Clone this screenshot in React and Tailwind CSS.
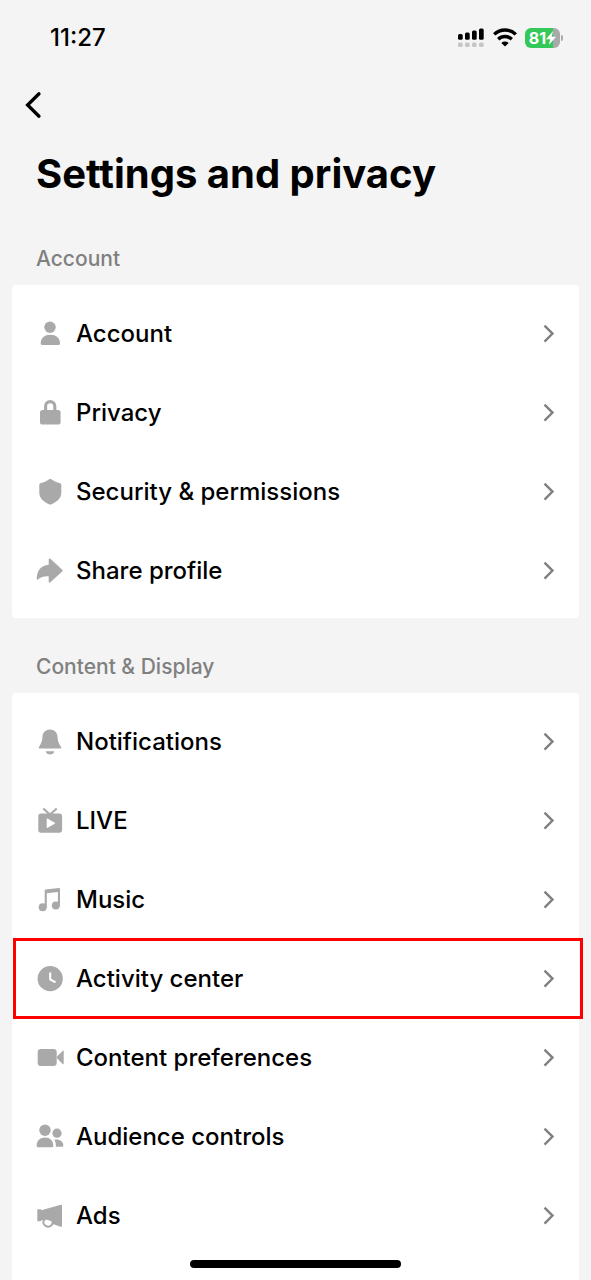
import React from 'react';

const AccountIcon = () => (
  <>
    <circle cx="14" cy="7.3" r="5.7" />
    <path d="M4.7 23.2C4.7 18 8.6 14.7 14.3 14.7S24 18 24 23.2c0 1.2-.6 1.800-1.800 1.800H6.500c-1.200 0-1.800-.6-1.800-1.800Z" />
  </>
);

const LockIcon = () => (
  <>
    <rect x="4" y="11" width="20.600" height="14.600" rx="2.600" />
    <path d="M9.600 13V7.200a4.600 4.600 0 0 1 9.200 0V13" fill="none" stroke="currentColor" strokeWidth="3.100" />
  </>
);

const ShieldIcon = () => (
  <path d="M13.600 1.100a1.800 1.800 0 0 1 1.400 0c3.200 2.200 6 3.400 9.200 4.200.7.2 1.100.6 1.100 1.300v8.200c0 5.200-4.200 9.300-10.300 11.600a1.900 1.900 0 0 1-1.400 0C7.500 24.100 3.300 20 3.300 14.800V6.600c0-.7.4-1.100 1.100-1.300 3.200-.8 6-2 9.200-4.200Z" />
);

const ShareIcon = () => (
  <path d="M12.700 2.500c0-1.100.9-1.400 1.700-.7l11.800 10.900c.6.5.6 1.200 0 1.700L14.400 25.300c-.8.7-1.700.3-1.700-.7v-5.300c-4.700-.2-7.900.7-10.500 3-.8.7-1.500.4-1.500-.6C.9 13.500 5.100 8.200 12.700 7.700V2.500Z" />
);

const BellIcon = () => (
  <>
    <path d="M14 1.500c4.300 0 7.300 3 7.500 7.100.2 4.300.9 6.400 3.500 10.400.6.9.3 1.500-.7 1.500H3.700c-1 0-1.300-.6-.7-1.500 2.600-4 3.300-6.100 3.500-10.400.2-4.100 3.200-7.100 7.500-7.100Z" />
    <path d="M10.400 23.200h7.200c.6 0 .8.500.4 1-1 1.500-2.300 2.200-4 2.200s-3-.7-4-2.200c-.4-.5-.2-1 .4-1Z" />
  </>
);

const LiveIcon = () => (
  <>
    <path fillRule="evenodd" d="M5.100 6.500h18.200c1.800 0 2.800 1 2.800 2.800v13.700c0 1.800-1 2.800-2.800 2.800H5.100c-1.800 0-2.800-1-2.800-2.800V9.300c0-1.800 1-2.800 2.800-2.800Zm5.600 5.600v8.200c0 .5.400.7.900.5l7.200-4.100c.5-.3.5-.7 0-1l-7.200-4.100c-.5-.2-.9 0-.9.500Z" />
    <path d="m7.300 1.400 6.700 6.200 6.700-6.200" fill="none" stroke="currentColor" strokeWidth="2" />
  </>
);

const MusicIcon = () => (
  <>
    <circle cx="6.700" cy="21.300" r="4" />
    <circle cx="19.800" cy="19.600" r="4" />
    <path d="M8.700 21.300V4.500c0-.7.300-1 1-1.100l13.200-1.500c.7-.1 1.100.2 1.100.9v16.800h-2.100V5.900L10.800 7.200v14.100Z" />
  </>
);

const ClockIcon = () => (
  <>
    <circle cx="14.200" cy="13.700" r="12.600" />
    <path d="M14.200 7.500v6.900l5.300 3" fill="none" stroke="#fff" strokeWidth="2.100" />
  </>
);

const VideoIcon = () => (
  <>
    <rect x="1.700" y="4.900" width="19" height="17" rx="3.200" />
    <path d="m21.300 12.200 5.300-5.300c.6-.6 1.100-.4 1.100.3v12.400c0 .7-.5.900-1.100.3l-5.300-5.300a1.700 1.700 0 0 1 0-2.400Z" />
  </>
);

const AudienceIcon = () => (
  <>
    <circle cx="9" cy="7.200" r="5.700" />
    <circle cx="21" cy="10.200" r="4.600" />
    <path d="M.7 22.400c0-4.700 3.300-7.900 8.300-7.900s8.300 3.200 8.300 7.900c0 1.200-.5 1.800-1.600 1.800H2.300c-1.100 0-1.600-.6-1.600-1.800Z" />
    <path d="M18.300 16.800c4.900-1.100 9 1.500 9 5.600 0 .8-.4 1.300-1.200 1.300h-6.200c.1-2.900-.3-4.900-1.600-6.900Z" />
  </>
);

const AdsIcon = () => (
  <>
    <path d="M1.900 7.200h2.300c.8 0 1.100.3 1.300 1L24.700 2.700c.8-.2 1.300.1 1.300.9v20.200c0 .8-.5 1.100-1.300.9L5.500 18.100c-.1.800-.5 1.200-1.300 1.200H1.900c-.4 0-.6-.2-.6-.6V7.800c0-.4.200-.6.600-.6Z" />
    <circle cx="12.300" cy="20" r="3.300" fill="#fff" />
    <path d="M6.900 16.500 17.900 20v-6h-11Z" />
    <path d="M7.500 18.600a4.700 4.700 0 1 0 9.400 2.400" fill="none" stroke="currentColor" strokeWidth="2" />
  </>
);

const sections = [
  {
    title: 'Account',
    items: [
      { label: 'Account', icon: AccountIcon },
      { label: 'Privacy', icon: LockIcon },
      { label: 'Security & permissions', icon: ShieldIcon },
      { label: 'Share profile', icon: ShareIcon },
    ],
  },
  {
    title: 'Content & Display',
    grow: true,
    items: [
      { label: 'Notifications', icon: BellIcon },
      { label: 'LIVE', icon: LiveIcon },
      { label: 'Music', icon: MusicIcon },
      { label: 'Activity center', icon: ClockIcon, highlighted: true },
      { label: 'Content preferences', icon: VideoIcon },
      { label: 'Audience controls', icon: AudienceIcon },
      { label: 'Ads', icon: AdsIcon },
    ],
  },
];

function StatusBar() {
  return (
    <div className="flex h-19 items-center justify-between pr-7 pl-[50px]">
      <span className="text-2xl leading-7 font-medium">11:27</span>
      <div className="flex items-center gap-2">
        <svg className="h-5 w-[27px]" viewBox="0 0 27 20" aria-hidden="true">
          <rect x="0" y="6" width="4.700" height="5.700" rx="1.500" />
          <rect x="7" y="4.600" width="4.700" height="7.100" rx="1.500" />
          <rect x="14" y="2.600" width="4.700" height="9.100" rx="1.500" />
          <rect x="21" y="0.400" width="4.700" height="11.300" rx="1.500" />
          <g fill="#c6c6c6">
            <rect x="0" y="14.600" width="4.700" height="4.500" rx="1.500" />
            <rect x="7" y="14.600" width="4.700" height="4.500" rx="1.500" />
            <rect x="14" y="14.600" width="4.700" height="4.500" rx="1.500" />
            <rect x="21" y="14.600" width="4.700" height="4.500" rx="1.500" />
          </g>
        </svg>
        <svg className="h-5 w-6" viewBox="0 0 24 20" fill="none" stroke="#000" strokeWidth="3.400" aria-hidden="true">
          <path d="M1.200 6.400a15.400 15.400 0 0 1 21.600 0" />
          <path d="M5.200 11.200a9.800 9.800 0 0 1 13.600 0" />
          <path d="M12 18.400 8.300 14.900a5.400 5.400 0 0 1 7.400 0Z" fill="#000" stroke="none" />
        </svg>
        <div className="flex items-center gap-px">
          <div className="flex h-5 w-[35px] items-center justify-center rounded-md bg-linear-to-r from-[#34c759] from-81% to-[#a9a9a9] to-81% text-white">
            <span className="text-base leading-5 font-bold">81</span>
            <svg className="h-4 w-2.5" viewBox="0 0 10 16" fill="#fff" aria-hidden="true">
              <path d="M7 1 0 9.200h4.200L2.800 15 10 6.800H5.700Z" />
            </svg>
          </div>
          <span className="h-1.5 w-0.5 rounded-r-full bg-[#a9a9a9]" />
        </div>
      </div>
    </div>
  );
}

function SettingsRow({ item }) {
  const Icon = item.icon;
  return (
    <li className="relative">
      <button type="button" className="flex h-[79px] w-full items-center gap-3 px-6 text-left">
        <svg className="size-7 shrink-0 text-[#a9a9a9]" viewBox="0 0 28 28" fill="currentColor" aria-hidden="true">
          <Icon />
        </svg>
        <span className="flex-1 text-2xl font-medium">{item.label}</span>
        <svg className="h-5 w-3 shrink-0" viewBox="0 0 12 20" fill="none" stroke="#808080" strokeWidth="2.400" aria-hidden="true">
          <path d="m1.500 1.600 8 8-8 8" />
        </svg>
      </button>
      {item.highlighted && (
        <span className="pointer-events-none absolute -inset-y-px -right-1 left-px z-10 border-3 border-[#ff0000]" />
      )}
    </li>
  );
}

export default function App() {
  return (
    <div className="flex min-h-screen flex-col bg-[#f4f4f4] font-['Inter',sans-serif] text-black">
      <StatusBar />

      <header>
        <div className="flex h-[58px] items-center px-6">
          <button type="button" aria-label="Back">
            <svg className="h-7 w-[18px]" viewBox="0 0 18 28" fill="none" stroke="#000" strokeWidth="3.300" strokeLinecap="round" aria-hidden="true">
              <path d="M15 2.800 3.600 14 15 25.200" />
            </svg>
          </button>
        </div>
        <h1 className="px-9 pt-3 pb-2 text-[40px] leading-14 font-bold">Settings and privacy</h1>
      </header>

      <main className="flex grow flex-col">
        {sections.map(section => (
          <section key={section.title} className={`flex flex-col ${section.grow ? 'grow' : ''}`}>
            <h2 className="px-9 pt-[35px] pb-3 text-[21px] leading-7 font-medium text-[#808080]">{section.title}</h2>
            <ul className={`mx-3 bg-white pt-[9px] ${section.grow ? 'grow rounded-t' : 'rounded pb-2'}`}>
              {section.items.map(item => <SettingsRow key={item.label} item={item} />)}
            </ul>
          </section>
        ))}
      </main>

      {/* Home indicator */}
      <div className="pointer-events-none fixed inset-x-0 bottom-3 flex justify-center">
        <span className="h-2 w-[211px] rounded-full bg-black" />
      </div>
    </div>
  );
}
